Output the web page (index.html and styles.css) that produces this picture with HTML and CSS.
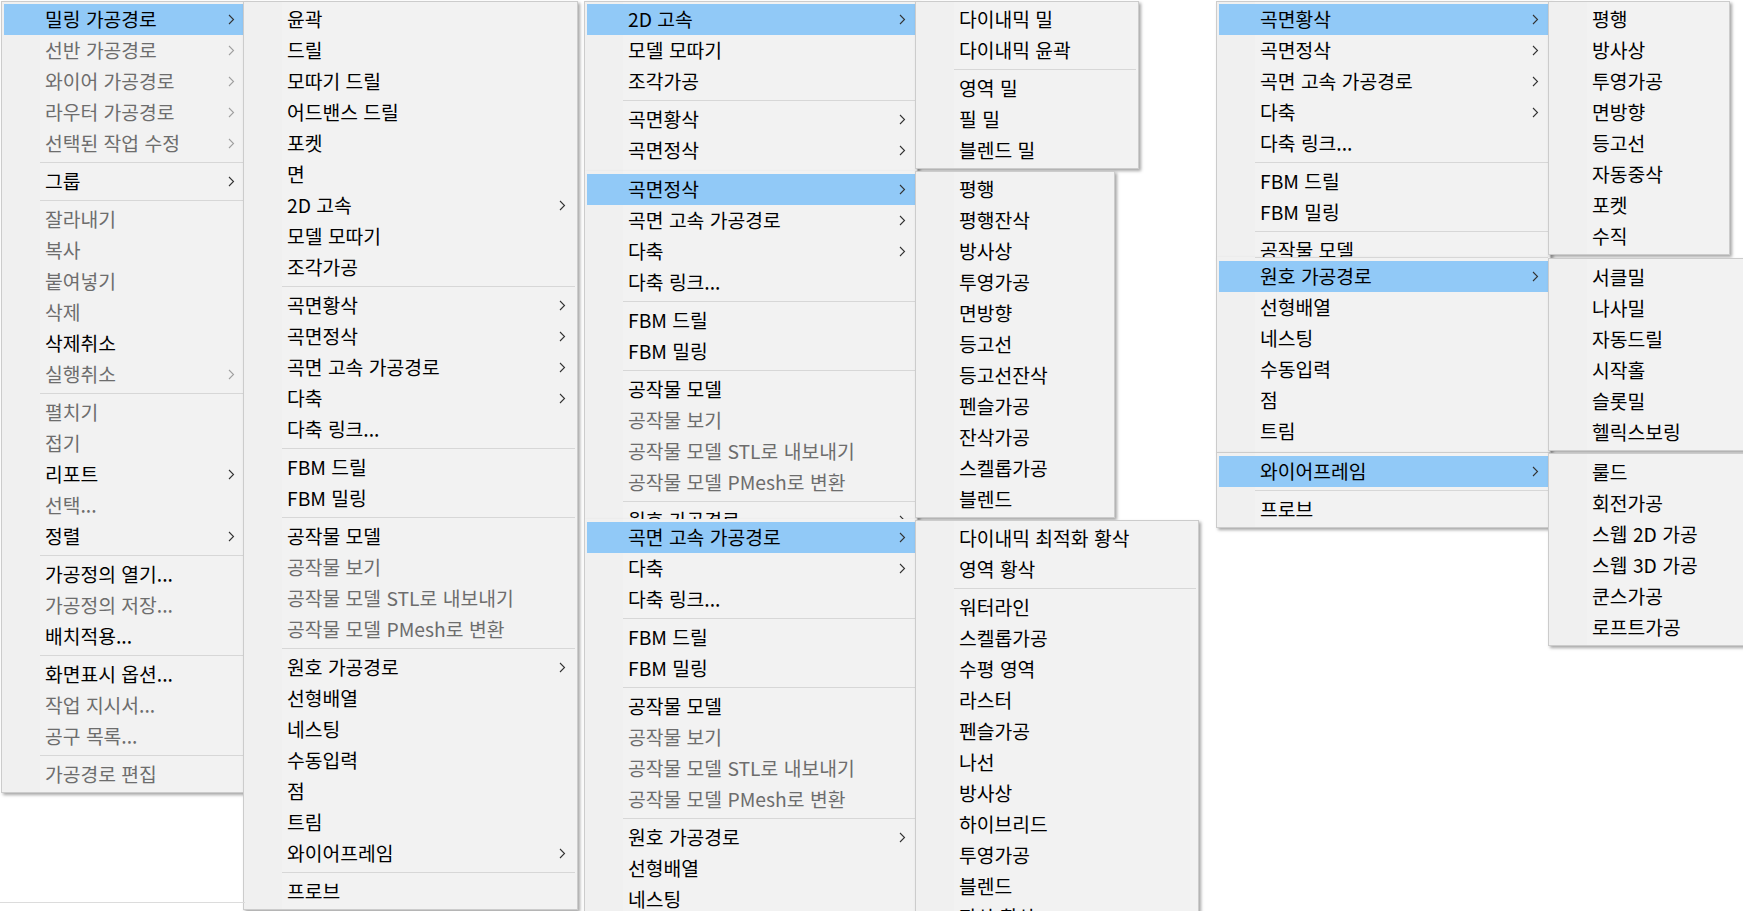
FILE: index.html
```html
<!DOCTYPE html>
<html lang="ko">
<head>
  <meta charset="UTF-8" />
  <title>가공경로 메뉴</title>
  <link rel="stylesheet" href="styles.css">
</head>
<body>

<div class="desk">

  <!-- main context menu -->
  <div class="menu m-main">
    <div class="item hot">밀링 가공경로<svg class="arr" viewBox="0 0 7 11"><path d="M1 1l4.5 4.5L1 10"/></svg></div>
    <div class="item off">선반 가공경로<svg class="arr" viewBox="0 0 7 11"><path d="M1 1l4.5 4.5L1 10"/></svg></div>
    <div class="item off">와이어 가공경로<svg class="arr" viewBox="0 0 7 11"><path d="M1 1l4.5 4.5L1 10"/></svg></div>
    <div class="item off">라우터 가공경로<svg class="arr" viewBox="0 0 7 11"><path d="M1 1l4.5 4.5L1 10"/></svg></div>
    <div class="item off">선택된 작업 수정<svg class="arr" viewBox="0 0 7 11"><path d="M1 1l4.5 4.5L1 10"/></svg></div>
    <div class="sep"></div>
    <div class="item">그룹<svg class="arr" viewBox="0 0 7 11"><path d="M1 1l4.5 4.5L1 10"/></svg></div>
    <div class="sep"></div>
    <div class="item off">잘라내기</div>
    <div class="item off">복사</div>
    <div class="item off">붙여넣기</div>
    <div class="item off">삭제</div>
    <div class="item">삭제취소</div>
    <div class="item off">실행취소<svg class="arr" viewBox="0 0 7 11"><path d="M1 1l4.5 4.5L1 10"/></svg></div>
    <div class="sep"></div>
    <div class="item off">펼치기</div>
    <div class="item off">접기</div>
    <div class="item">리포트<svg class="arr" viewBox="0 0 7 11"><path d="M1 1l4.5 4.5L1 10"/></svg></div>
    <div class="item off">선택...</div>
    <div class="item">정렬<svg class="arr" viewBox="0 0 7 11"><path d="M1 1l4.5 4.5L1 10"/></svg></div>
    <div class="sep"></div>
    <div class="item">가공정의 열기...</div>
    <div class="item off">가공정의 저장...</div>
    <div class="item">배치적용...</div>
    <div class="sep"></div>
    <div class="item">화면표시 옵션...</div>
    <div class="item off">작업 지시서...</div>
    <div class="item off">공구 목록...</div>
    <div class="sep"></div>
    <div class="item off">가공경로 편집</div>
  </div>

  <!-- 밀링 가공경로 -->
  <div class="menu m-mill">
    <div class="item">윤곽</div>
    <div class="item">드릴</div>
    <div class="item">모따기 드릴</div>
    <div class="item">어드밴스 드릴</div>
    <div class="item">포켓</div>
    <div class="item">면</div>
    <div class="item">2D 고속<svg class="arr" viewBox="0 0 7 11"><path d="M1 1l4.5 4.5L1 10"/></svg></div>
    <div class="item">모델 모따기</div>
    <div class="item">조각가공</div>
    <div class="sep"></div>
    <div class="item">곡면황삭<svg class="arr" viewBox="0 0 7 11"><path d="M1 1l4.5 4.5L1 10"/></svg></div>
    <div class="item">곡면정삭<svg class="arr" viewBox="0 0 7 11"><path d="M1 1l4.5 4.5L1 10"/></svg></div>
    <div class="item">곡면 고속 가공경로<svg class="arr" viewBox="0 0 7 11"><path d="M1 1l4.5 4.5L1 10"/></svg></div>
    <div class="item">다축<svg class="arr" viewBox="0 0 7 11"><path d="M1 1l4.5 4.5L1 10"/></svg></div>
    <div class="item">다축 링크...</div>
    <div class="sep"></div>
    <div class="item">FBM 드릴</div>
    <div class="item">FBM 밀링</div>
    <div class="sep"></div>
    <div class="item">공작물 모델</div>
    <div class="item off">공작물 보기</div>
    <div class="item off">공작물 모델 STL로 내보내기</div>
    <div class="item off">공작물 모델 PMesh로 변환</div>
    <div class="sep"></div>
    <div class="item">원호 가공경로<svg class="arr" viewBox="0 0 7 11"><path d="M1 1l4.5 4.5L1 10"/></svg></div>
    <div class="item">선형배열</div>
    <div class="item">네스팅</div>
    <div class="item">수동입력</div>
    <div class="item">점</div>
    <div class="item">트림</div>
    <div class="item">와이어프레임<svg class="arr" viewBox="0 0 7 11"><path d="M1 1l4.5 4.5L1 10"/></svg></div>
    <div class="sep"></div>
    <div class="item">프로브</div>
  </div>

  <!-- third column: three cropped shots of the same menu -->
  <div class="menu m-c1">
    <div class="item hot">2D 고속<svg class="arr" viewBox="0 0 7 11"><path d="M1 1l4.5 4.5L1 10"/></svg></div>
    <div class="item">모델 모따기</div>
    <div class="item">조각가공</div>
    <div class="sep"></div>
    <div class="item">곡면황삭<svg class="arr" viewBox="0 0 7 11"><path d="M1 1l4.5 4.5L1 10"/></svg></div>
    <div class="item">곡면정삭<svg class="arr" viewBox="0 0 7 11"><path d="M1 1l4.5 4.5L1 10"/></svg></div>
    <div class="item">곡면 고속 가공경로<svg class="arr" viewBox="0 0 7 11"><path d="M1 1l4.5 4.5L1 10"/></svg></div>
  </div>

  <div class="menu cont m-c2">
    <div class="item hot">곡면정삭<svg class="arr" viewBox="0 0 7 11"><path d="M1 1l4.5 4.5L1 10"/></svg></div>
    <div class="item">곡면 고속 가공경로<svg class="arr" viewBox="0 0 7 11"><path d="M1 1l4.5 4.5L1 10"/></svg></div>
    <div class="item">다축<svg class="arr" viewBox="0 0 7 11"><path d="M1 1l4.5 4.5L1 10"/></svg></div>
    <div class="item">다축 링크...</div>
    <div class="sep"></div>
    <div class="item">FBM 드릴</div>
    <div class="item">FBM 밀링</div>
    <div class="sep"></div>
    <div class="item">공작물 모델</div>
    <div class="item off">공작물 보기</div>
    <div class="item off">공작물 모델 STL로 내보내기</div>
    <div class="item off">공작물 모델 PMesh로 변환</div>
    <div class="sep"></div>
    <div class="item">원호 가공경로<svg class="arr" viewBox="0 0 7 11"><path d="M1 1l4.5 4.5L1 10"/></svg></div>
  </div>

  <div class="menu cont m-c3">
    <div class="item hot">곡면 고속 가공경로<svg class="arr" viewBox="0 0 7 11"><path d="M1 1l4.5 4.5L1 10"/></svg></div>
    <div class="item">다축<svg class="arr" viewBox="0 0 7 11"><path d="M1 1l4.5 4.5L1 10"/></svg></div>
    <div class="item">다축 링크...</div>
    <div class="sep"></div>
    <div class="item">FBM 드릴</div>
    <div class="item">FBM 밀링</div>
    <div class="sep"></div>
    <div class="item">공작물 모델</div>
    <div class="item off">공작물 보기</div>
    <div class="item off">공작물 모델 STL로 내보내기</div>
    <div class="item off">공작물 모델 PMesh로 변환</div>
    <div class="sep"></div>
    <div class="item">원호 가공경로<svg class="arr" viewBox="0 0 7 11"><path d="M1 1l4.5 4.5L1 10"/></svg></div>
    <div class="item">선형배열</div>
    <div class="item">네스팅</div>
    <div class="item">수동입력</div>
  </div>

  <!-- 2D 고속 -->
  <div class="menu m-d1">
    <div class="item">다이내믹 밀</div>
    <div class="item">다이내믹 윤곽</div>
    <div class="sep"></div>
    <div class="item">영역 밀</div>
    <div class="item">필 밀</div>
    <div class="item">블렌드 밀</div>
  </div>

  <!-- 곡면정삭 -->
  <div class="menu m-d2">
    <div class="item">평행</div>
    <div class="item">평행잔삭</div>
    <div class="item">방사상</div>
    <div class="item">투영가공</div>
    <div class="item">면방향</div>
    <div class="item">등고선</div>
    <div class="item">등고선잔삭</div>
    <div class="item">펜슬가공</div>
    <div class="item">잔삭가공</div>
    <div class="item">스켈롭가공</div>
    <div class="item">블렌드</div>
  </div>

  <!-- 곡면 고속 가공경로 -->
  <div class="menu m-d3">
    <div class="item">다이내믹 최적화 황삭</div>
    <div class="item">영역 황삭</div>
    <div class="sep"></div>
    <div class="item">워터라인</div>
    <div class="item">스켈롭가공</div>
    <div class="item">수평 영역</div>
    <div class="item">라스터</div>
    <div class="item">펜슬가공</div>
    <div class="item">나선</div>
    <div class="item">방사상</div>
    <div class="item">하이브리드</div>
    <div class="item">투영가공</div>
    <div class="item">블렌드</div>
    <div class="item">잔삭 황삭</div>
  </div>

  <!-- fifth column -->
  <div class="menu m-e1">
    <div class="item hot">곡면황삭<svg class="arr" viewBox="0 0 7 11"><path d="M1 1l4.5 4.5L1 10"/></svg></div>
    <div class="item">곡면정삭<svg class="arr" viewBox="0 0 7 11"><path d="M1 1l4.5 4.5L1 10"/></svg></div>
    <div class="item">곡면 고속 가공경로<svg class="arr" viewBox="0 0 7 11"><path d="M1 1l4.5 4.5L1 10"/></svg></div>
    <div class="item">다축<svg class="arr" viewBox="0 0 7 11"><path d="M1 1l4.5 4.5L1 10"/></svg></div>
    <div class="item">다축 링크...</div>
    <div class="sep"></div>
    <div class="item">FBM 드릴</div>
    <div class="item">FBM 밀링</div>
    <div class="sep"></div>
    <div class="item">공작물 모델</div>
  </div>

  <div class="menu cont m-e2">
    <div class="cut"></div>
    <div class="item hot">원호 가공경로<svg class="arr" viewBox="0 0 7 11"><path d="M1 1l4.5 4.5L1 10"/></svg></div>
    <div class="item">선형배열</div>
    <div class="item">네스팅</div>
    <div class="item">수동입력</div>
    <div class="item">점</div>
    <div class="item">트림</div>
  </div>

  <div class="menu m-e3">
    <div class="item hot">와이어프레임<svg class="arr" viewBox="0 0 7 11"><path d="M1 1l4.5 4.5L1 10"/></svg></div>
    <div class="sep"></div>
    <div class="item">프로브</div>
  </div>

  <!-- 곡면황삭 -->
  <div class="menu m-f1">
    <div class="item">평행</div>
    <div class="item">방사상</div>
    <div class="item">투영가공</div>
    <div class="item">면방향</div>
    <div class="item">등고선</div>
    <div class="item">자동중삭</div>
    <div class="item">포켓</div>
    <div class="item">수직</div>
  </div>

  <!-- 원호 가공경로 -->
  <div class="menu m-f2">
    <div class="item">서클밀</div>
    <div class="item">나사밀</div>
    <div class="item">자동드릴</div>
    <div class="item">시작홀</div>
    <div class="item">슬롯밀</div>
    <div class="item">헬릭스보링</div>
  </div>

  <!-- 와이어프레임 -->
  <div class="menu m-f3">
    <div class="item">룰드</div>
    <div class="item">회전가공</div>
    <div class="item">스웹 2D 가공</div>
    <div class="item">스웹 3D 가공</div>
    <div class="item">쿤스가공</div>
    <div class="item">로프트가공</div>
  </div>

  <div class="floor"></div>
</div>

</body>
</html>
```

FILE: styles.css
```css
html, body { margin: 0; padding: 0; background: #fff; }
body {
  font-family: "Noto Sans CJK KR", "Noto Sans", sans-serif;
  font-size: 19.3px; color: #000;
}
.desk {
  position: relative; width: 1743px; height: 911px;
  overflow: hidden; background: #fff;
}

/* one popup menu */
.menu {
  position: absolute; box-sizing: border-box;
  border: 1px solid #ccc; padding: 2px;
  background: linear-gradient(to right, #f0f0f0 38px, #f2f2f2 38px);
  box-shadow: 2px 2px 3px rgba(0,0,0,0.35);
  overflow: hidden;
}
.menu.cont { border-top: none; padding-top: 3px; }

.item {
  display: flex; align-items: center; justify-content: space-between;
  height: 31px; line-height: 31px;
  padding: 0 9px 0 41px;
  white-space: nowrap;
}
.item.off { color: #6d6d6d; }
.item.hot { background: #91c9f7; }

.sep { height: 7px; display: flex; align-items: center; margin-left: 36px; }
.sep::before { content: ""; flex: 1; height: 1px; background: #d7d7d7; }
.cut { height: 1px; margin: -3px 0 3px 36px; background: #d7d7d7; }

.arr { width: 7px; height: 11px; fill: none; stroke: #333; stroke-width: 1.1; flex: none; }
.off .arr { stroke: #a0a0a0; }

/* placement of each shot on the canvas */
.m-main { left: 1px; top: 1px; width: 246px; }
.m-mill { left: 243px; top: 1px; width: 335px; }

.m-c1 { left: 584px; top: 1px; width: 334px; height: 170px; border-bottom: none; }
.m-c2 { left: 584px; top: 171px; width: 334px; height: 348px; border-bottom: none; }
.m-c3 { left: 584px; top: 519px; width: 334px; height: 400px; }

.m-d1 { left: 915px; top: 1px; width: 224px; }
.m-d2 { left: 915px; top: 171px; width: 200px; }
.m-d3 { left: 915px; top: 520px; width: 284px; }

.m-e1 { left: 1216px; top: 1px; width: 335px; height: 257px; border-bottom: none; }
.m-e2 { left: 1216px; top: 257px; width: 335px; height: 195px; border-bottom: none; }
.m-e3 { left: 1216px; top: 452px; width: 335px; padding-top: 3px; }

.m-f1 { left: 1548px; top: 1px; width: 182px; }
.m-f2 { left: 1548px; top: 258px; width: 212px; padding-top: 3px; }
.m-f3 { left: 1548px; top: 453px; width: 212px; padding-top: 3px; }

.floor {
  position: absolute; left: 0; top: 902px;
  width: 245px; height: 1px; background: #dcdcdc;
}
```
